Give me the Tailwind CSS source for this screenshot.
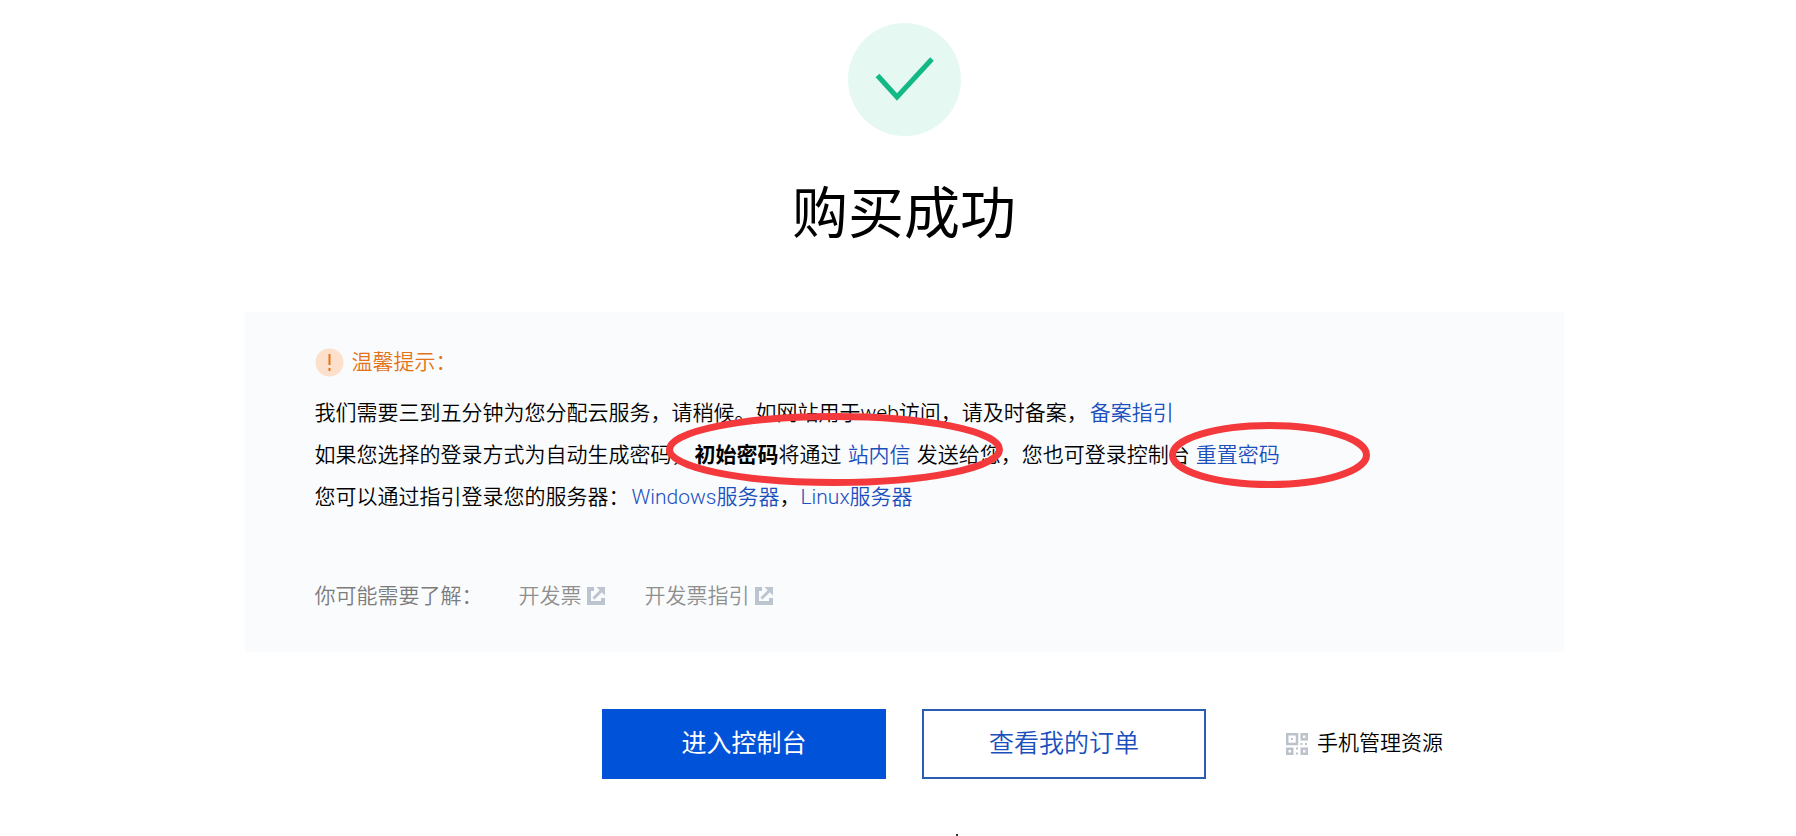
<!DOCTYPE html>
<html lang="zh-CN">
<head>
<meta charset="utf-8">
<meta name="viewport" content="width=device-width, initial-scale=1">
<title>购买成功</title>
<script src="https://cdn.jsdelivr.net/npm/@tailwindcss/browser@4"></script>
</head>
<body class="bg-white pl-3 text-[21px] font-[350] text-black font-['Roboto','Noto_Sans_CJK_SC',sans-serif]">
<main class="mx-auto flex w-full max-w-[1319px] flex-col pt-[23px]">
  <header class="flex flex-col items-center">
    <svg class="size-[113px]" viewBox="0 0 113 113" fill="none" aria-hidden="true">
      <circle cx="56.5" cy="56.5" r="56.5" fill="#e5f8f1"/>
      <path d="M29.500 52.500 L49 74 L84 36" stroke="#12b886" stroke-width="5"/>
    </svg>
    <h1 class="mt-[33px] text-[56px] leading-[80px] font-normal font-['Noto_Sans_CJK_SC',sans-serif]">购买成功</h1>
  </header>

  <section class="relative mt-[63px] bg-[#fafbfd] px-[70px] pt-[34px] pb-10">
    <h2 class="flex items-center gap-2 leading-8 font-[350] text-[#e37318]">
      <svg class="size-[29px]" viewBox="0 0 29 29" aria-hidden="true">
        <circle cx="14.500" cy="14.500" r="14" fill="#fde0cb"/>
        <path d="M13.500 6h2v11h-2zM13.500 20h2v3h-2z" fill="#e37318"/>
      </svg>
      温馨提示：
    </h2>
    <div class="mt-[14px] leading-[42px]">
      <p>我们需要三到五分钟为您分配云服务，请稍候。如网站用于web访问，请及时备案，<a href="#" class="mx-0.5 text-[#1a4fbd]">备案指引</a></p>
      <p>如果您选择的登录方式为自动生成密码，<strong class="ml-0.5 font-bold">初始密码</strong>将通过 <a href="#" class="mx-px text-[#1a4fbd]">站内信</a> 发送给您，您也可登录控制台 <a href="#" class="mx-px text-[#1a4fbd]">重置密码</a></p>
      <p>您可以通过指引登录您的服务器：<a href="#" class="ml-0.5 text-[#1a4fbd]">Windows服务器</a>，<a href="#" class="text-[#1a4fbd]">Linux服务器</a></p>
    </div>
    <div class="mt-[62px] flex items-center leading-8 text-[#8f8f8f]">
      <span class="mr-9 text-[#7c7c7c]">你可能需要了解：</span>
      <a href="#" class="mr-10 flex items-center gap-[5px]">开发票
        <svg class="size-[18px]" viewBox="0 0 18 18" fill="none" aria-hidden="true">
          <path d="M7 2H2V16H16V11" stroke="#bcc4d0" stroke-width="4"/>
          <path d="M6.500 11.500L14 4" stroke="#bcc4d0" stroke-width="3"/>
          <path d="M9.500 0H18V8.500Z" fill="#bcc4d0"/>
        </svg>
      </a>
      <a href="#" class="flex items-center gap-[5px]">开发票指引
        <svg class="size-[18px]" viewBox="0 0 18 18" fill="none" aria-hidden="true">
          <path d="M7 2H2V16H16V11" stroke="#bcc4d0" stroke-width="4"/>
          <path d="M6.500 11.500L14 4" stroke="#bcc4d0" stroke-width="3"/>
          <path d="M9.500 0H18V8.500Z" fill="#bcc4d0"/>
        </svg>
      </a>
    </div>

    <!-- Hand-drawn highlights over the password hints -->
    <svg class="pointer-events-none absolute top-[101px] left-[421px] h-[73px] w-[337px]" viewBox="0 0 337 73" fill="none" aria-hidden="true">
      <ellipse cx="168.500" cy="36.500" rx="165" ry="33" stroke="#f4393c" stroke-width="7"/>
    </svg>
    <svg class="pointer-events-none absolute top-[110px] left-[924px] h-[66px] w-[201px]" viewBox="0 0 201 66" fill="none" aria-hidden="true">
      <ellipse cx="100.500" cy="33" rx="97" ry="29.500" stroke="#f4393c" stroke-width="7"/>
    </svg>
  </section>

  <div class="mt-[57px] grid grid-cols-[1fr_auto_1fr] items-center">
    <div class="col-start-2 flex gap-9">
      <button type="button" class="h-[70px] w-[284px] bg-[#0052d9] text-[25px] font-normal text-white">进入控制台</button>
      <button type="button" class="h-[70px] w-[284px] border-2 border-[#2a5db8] bg-white text-[25px] text-[#1a4fbd]">查看我的订单</button>
    </div>
    <a href="#" class="ml-20 flex items-center gap-[9px]">
      <svg class="size-[22px]" viewBox="0 0 22 22" fill="none" aria-hidden="true">
        <g stroke="#bcc2cb" stroke-width="2.500">
          <path d="M1.250 1.250H11V11H1.250ZM15.750 1.250H20.750V6.250H15.750ZM1.250 15.750H6.250V20.750H1.250ZM15.750 15.750H20.750V20.750H15.750Z"/>
        </g>
        <path d="M5 5h2v2h-2zM14.500 10h2v2h-2zM19 10h2v2h-2zM10 14.500h2v2h-2zM10 19.500h2v2h-2z" fill="#bcc2cb"/>
      </svg>
      手机管理资源
    </a>
  </div>

  <div class="mt-[55px] ml-[711px] size-[2px] bg-[#333333]"></div>
</main>
</body>
</html>
